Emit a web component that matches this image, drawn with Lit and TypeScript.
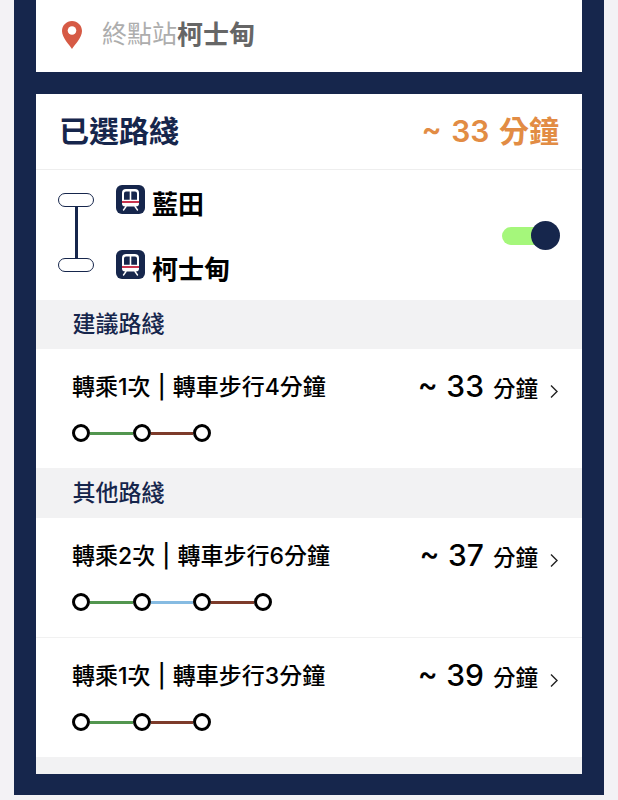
import { LitElement, html, css, svg } from "lit";
import { customElement } from "lit/decorators.js";

const GREEN = "#52964f";
const BROWN = "#7d3b2a";
const BLUE = "#86bbe2";

const trainIcon = html`<svg class="train" viewBox="0 0 29 29" aria-hidden="true">
  <rect width="29" height="29" rx="6" fill="#16264c"></rect>
  <path d="M10 4h9a4 4 0 0 1 4 4v10.500a3 3 0 0 1-3 3H9a3 3 0 0 1-3-3V8a4 4 0 0 1 4-4z" fill="#fff"></path>
  <path d="M10 6.500h3.700v8.300H8V8.500a2 2 0 0 1 2-2zM15.300 6.500H19a2 2 0 0 1 2 2v6.300h-5.700z" fill="#16264c"></path>
  <rect x="6" y="16" width="17" height="2" fill="#c8344e"></rect>
  <path d="M10 21.500 7.500 25M19 21.500 21.500 25" stroke="#fff" stroke-width="1.400" stroke-linecap="round" fill="none"></path>
</svg>`;

const pin = svg`<path d="M10 0C4.500 0 0 4.400 0 10c0 6.800 7.300 13.600 10 18 2.700-4.400 10-11.200 10-18C20 4.400 15.500 0 10 0z" fill="#d65a45"></path><circle cx="10" cy="9.500" r="4.300" fill="#fff"></circle>`;

interface Route {
  summary: string;
  minutes: number;
  lines: string[];
}

@customElement("app-root")
export class AppRoot extends LitElement {
  static styles = css`
    :host {
      display: block;
      width: 618px;
      height: 800px;
      overflow: hidden;
      background: #f3f2f5;
      font-family: "Inter", "Noto Sans CJK TC", sans-serif;
    }
    .frame {
      margin: 0 14px;
      height: 795px;
      box-sizing: border-box;
      background: #16264c;
      padding: 0 22px 21px;
      display: flex;
      flex-direction: column;
      gap: 22px;
    }
    .dest {
      height: 72px;
      flex: none;
      background: #fff;
      display: flex;
      align-items: center;
      padding: 0 0 8px 26px;
      box-sizing: border-box;
    }
    .pin { width: 20px; height: 28px; margin-right: 20px; margin-top: 6px; }
    .dest-label { font-size: 25px; color: #adadad; }
    .dest-name { font-size: 26px; color: #666; font-weight: 700; }
    .card {
      flex: 1;
      background: #fff;
      display: flex;
      flex-direction: column;
    }
    .head {
      height: 76px;
      flex: none;
      box-sizing: border-box;
      border-bottom: 1px solid #eeeeee;
      display: flex;
      align-items: center;
      justify-content: space-between;
      padding: 0 23px 5px 23px;
    }
    .title { font-size: 30px; font-weight: 700; color: #16264c; }
    .total { font-size: 30px; font-weight: 600; word-spacing: 2px; color: #e28c44; }
    .summary {
      height: 130px;
      flex: none;
      display: flex;
      align-items: flex-start;
      padding: 0 22px 0 22px;
      box-sizing: border-box;
    }
    .rail {
      width: 36px;
      margin-top: 23px;
      flex: none;
      display: flex;
      flex-direction: column;
      align-items: center;
    }
    .cap {
      width: 36px;
      height: 14px;
      box-sizing: border-box;
      border: 1.500px solid #16264c;
      border-radius: 7px;
    }
    .bar { width: 3px; height: 51px; background: #16264c; }
    .stations {
      margin: 15px 0 0 22px;
      flex: 1;
      display: flex;
      flex-direction: column;
      gap: 36px;
    }
    .station {
      height: 29px;
      display: flex;
      align-items: flex-start;
      gap: 7px;
      font-size: 26px;
      font-weight: 700;
      color: #000;
    }
    .station span { line-height: 40px; }
    .train { width: 29px; height: 29px; flex: none; }
    .toggle {
      width: 58px;
      height: 29px;
      margin-top: 51px;
      flex: none;
      display: flex;
      align-items: center;
      position: relative;
    }
    .track { width: 44px; height: 18px; border-radius: 9px; background: #a5f77b; }
    .knob {
      position: absolute;
      right: 0;
      top: 0;
      width: 29px;
      height: 29px;
      border-radius: 50%;
      background: #16264c;
    }
    .section {
      flex: none;
      height: 49px;
      box-sizing: border-box;
      background: #f2f2f3;
      padding: 0 36.500px 5px;
      display: flex;
      align-items: center;
      font-size: 23px;
      font-weight: 500;
      color: #16264c;
    }
    .section.second { height: 50px; }
    .route {
      flex: none;
      height: 119px;
      box-sizing: border-box;
      padding: 18px 24px 0 36px;
    }
    .route + .route { height: 120px; border-top: 1px solid #f1f1f1; }
    .route-top {
      display: flex;
      align-items: flex-start;
      justify-content: space-between;
      height: 38px;
    }
    .route-text {
      font-size: 23px;
      font-weight: 500;
      word-spacing: 1px;
      color: #000;
      line-height: 38px;
      margin-top: 1px;
    }
    .route-time {
      display: flex;
      align-items: baseline;
      color: #000;
      font-size: 22.500px;
      font-weight: 500;
      line-height: 38px;
    }
    .num { font-size: 30px; word-spacing: 0.500px; margin-right: 9px; }
    .chev { width: 8px; height: 15px; margin-left: 12px; align-self: flex-start; margin-top: 17px; }
    .stops {
      display: flex;
      align-items: center;
      margin-top: 19px;
    }
    .stop {
      width: 18px;
      height: 18px;
      box-sizing: border-box;
      border: 3px solid #000;
      border-radius: 50%;
      flex: none;
    }
    .seg { width: 42.500px; height: 3px; flex: none; }
    .foot { flex: 1; background: #f2f2f3; }
  `;

  private routes(list: Route[]) {
    return list.map(
      (r) => html`<div class="route">
        <div class="route-top">
          <div class="route-text">${r.summary}</div>
          <div class="route-time">
            <span class="num">~ ${r.minutes}</span><span>分鐘</span>
            <svg class="chev" viewBox="0 0 8 15" aria-hidden="true"><path d="M1 1.500 7 7.500 1 13.500" fill="none" stroke="#222" stroke-width="1.400"></path></svg>
          </div>
        </div>
        <div class="stops">
          <div class="stop"></div>
          ${r.lines.map(
            (c) => html`<div class="seg" style="background:${c}"></div><div class="stop"></div>`
          )}
        </div>
      </div>`
    );
  }

  render() {
    return html`<div class="frame">
      <div class="dest">
        <svg class="pin" viewBox="0 0 20 28" aria-hidden="true">${pin}</svg>
        <span class="dest-label">終點站</span><span class="dest-name">柯士甸</span>
      </div>
      <div class="card">
        <div class="head">
          <div class="title">已選路綫</div>
          <div class="total">~ 33 分鐘</div>
        </div>
        <div class="summary">
          <div class="rail">
            <div class="cap"></div>
            <div class="bar"></div>
            <div class="cap"></div>
          </div>
          <div class="stations">
            <div class="station">${trainIcon}<span>藍田</span></div>
            <div class="station">${trainIcon}<span>柯士甸</span></div>
          </div>
          <div class="toggle"><div class="track"></div><div class="knob"></div></div>
        </div>
        <div class="section">建議路綫</div>
        ${this.routes([{ summary: "轉乘1次 | 轉車步行4分鐘", minutes: 33, lines: [GREEN, BROWN] }])}
        <div class="section second">其他路綫</div>
        ${this.routes([
          { summary: "轉乘2次 | 轉車步行6分鐘", minutes: 37, lines: [GREEN, BLUE, BROWN] },
          { summary: "轉乘1次 | 轉車步行3分鐘", minutes: 39, lines: [GREEN, BROWN] },
        ])}
        <div class="foot"></div>
      </div>
    </div>`;
  }
}
